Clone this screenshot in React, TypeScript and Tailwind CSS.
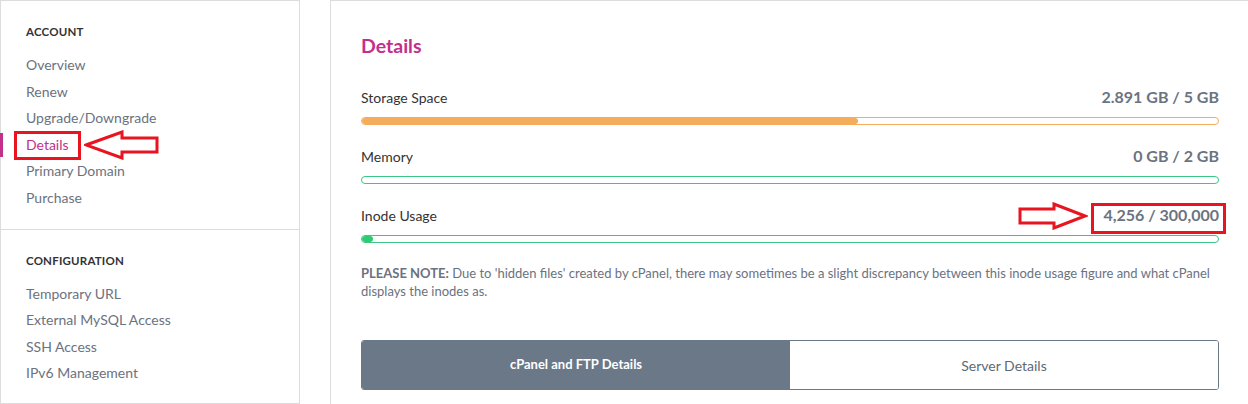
import React from "react";

const font = { fontFamily: "Lato, 'Open Sans', sans-serif" };

function SideItem({ label, active }: { label: string; active?: boolean }) {
  return (
    <div className="relative">
      {active && <div className="absolute left-[-26px] top-[1px] h-[24px] w-[3px] bg-[#c2308c]" />}
      <div className={`text-[14px] leading-[26.6px] ${active ? "text-[#c2308c]" : "text-[#6b7280]"}`}>{label}</div>
    </div>
  );
}

function Bar({ label, value, pct, color, track }: { label: string; value: string; pct: number; color: string; track: string }) {
  return (
    <div className="mb-[21px]">
      <div className="flex items-center justify-between h-[20px]">
        <span className="text-[14px] text-[#333]">{label}</span>
        <span className="text-[16px] font-bold text-[#6b7380]">{value}</span>
      </div>
      <div className={`mt-[10px] h-[8px] rounded-full border ${track} bg-white overflow-hidden`}>
        <div className={`h-full rounded-full ${color}`} style={{ width: `${pct}%` }} />
      </div>
    </div>
  );
}

export default function App() {
  return (
    <div className="relative w-[1248px] h-[404px] overflow-hidden bg-white flex items-start" style={font}>
      {/* Sidebar */}
      <div className="w-[300px] shrink-0 border border-[#dcdcdc]">
        <div className="pl-[25px] pt-[23px] pb-[17px]">
          <div className="text-[11.5px] font-bold leading-[16px] text-[#333] tracking-[0.2px]">ACCOUNT</div>
          <div className="mt-[12px]">
            <SideItem label="Overview" />
            <SideItem label="Renew" />
            <SideItem label="Upgrade/Downgrade" />
            <SideItem label="Details" active />
            <SideItem label="Primary Domain" />
            <SideItem label="Purchase" />
          </div>
        </div>
        <div className="border-t border-[#dcdcdc] pl-[25px] pt-[23px] pb-[16px]">
          <div className="text-[11.5px] font-bold leading-[16px] text-[#333] tracking-[0.2px]">CONFIGURATION</div>
          <div className="mt-[12px]">
            <SideItem label="Temporary URL" />
            <SideItem label="External MySQL Access" />
            <SideItem label="SSH Access" />
            <SideItem label="IPv6 Management" />
          </div>
        </div>
      </div>

      {/* Main */}
      <div className="ml-[30px] w-[920px] shrink-0 h-[420px] border border-[#dcdcdc] pl-[30px] pr-[30px] pt-[33px]">
        <div className="text-[19.5px] font-bold leading-[24px] text-[#c2308c]">Details</div>
        <div className="mt-[29px]">
          <Bar label="Storage Space" value="2.891 GB / 5 GB" pct={58} color="bg-[#f5ad5b]" track="border-[#f5ad5b]" />
          <Bar label="Memory" value="0 GB / 2 GB" pct={0} color="bg-[#3cc687]" track="border-[#3cc687]" />
          <Bar label="Inode Usage" value="4,256 / 300,000" pct={1.3} color="bg-[#2ecc71]" track="border-[#3cc687]" />
        </div>
        <p className="mt-[3px] text-[13px] leading-[18px] text-[#6b7280]">
          <b className="font-bold">PLEASE NOTE:</b> Due to 'hidden files' created by cPanel, there may sometimes be a slight discrepancy between this inode usage figure and what cPanel displays the inodes as.
        </p>
        <div className="mt-[40px] flex h-[50px] rounded-[3px] border border-[#6b7888] overflow-hidden">
          <div className="flex-1 bg-[#6b7888] flex items-center justify-center text-[13px] font-bold text-white">cPanel and FTP Details</div>
          <div className="flex-1 bg-white flex items-center justify-center text-[14px] text-[#5f6875]">Server Details</div>
        </div>
      </div>

      {/* Annotations */}
      <div className="absolute left-[14px] top-[131px] w-[67px] h-[29px] border-[3px] border-[#e8141f]" />
      <svg className="absolute left-[84px] top-[130px]" width="76" height="30" viewBox="0 0 76 30">
        <path d="M2 15 L38 2 L38 8 L73 8 L73 22 L38 22 L38 28 Z" fill="none" stroke="#e8141f" strokeWidth="3" strokeLinejoin="miter" />
      </svg>
      <svg className="absolute left-[1018px] top-[202px]" width="70" height="28" viewBox="0 0 70 28">
        <path d="M67 14 L36 2 L36 7 L2 7 L2 21 L36 21 L36 26 Z" fill="none" stroke="#e8141f" strokeWidth="3" strokeLinejoin="miter" />
      </svg>
      <div className="absolute left-[1091px] top-[203px] w-[135px] h-[31px] border-[3px] border-[#e8141f]" />
    </div>
  );
}
